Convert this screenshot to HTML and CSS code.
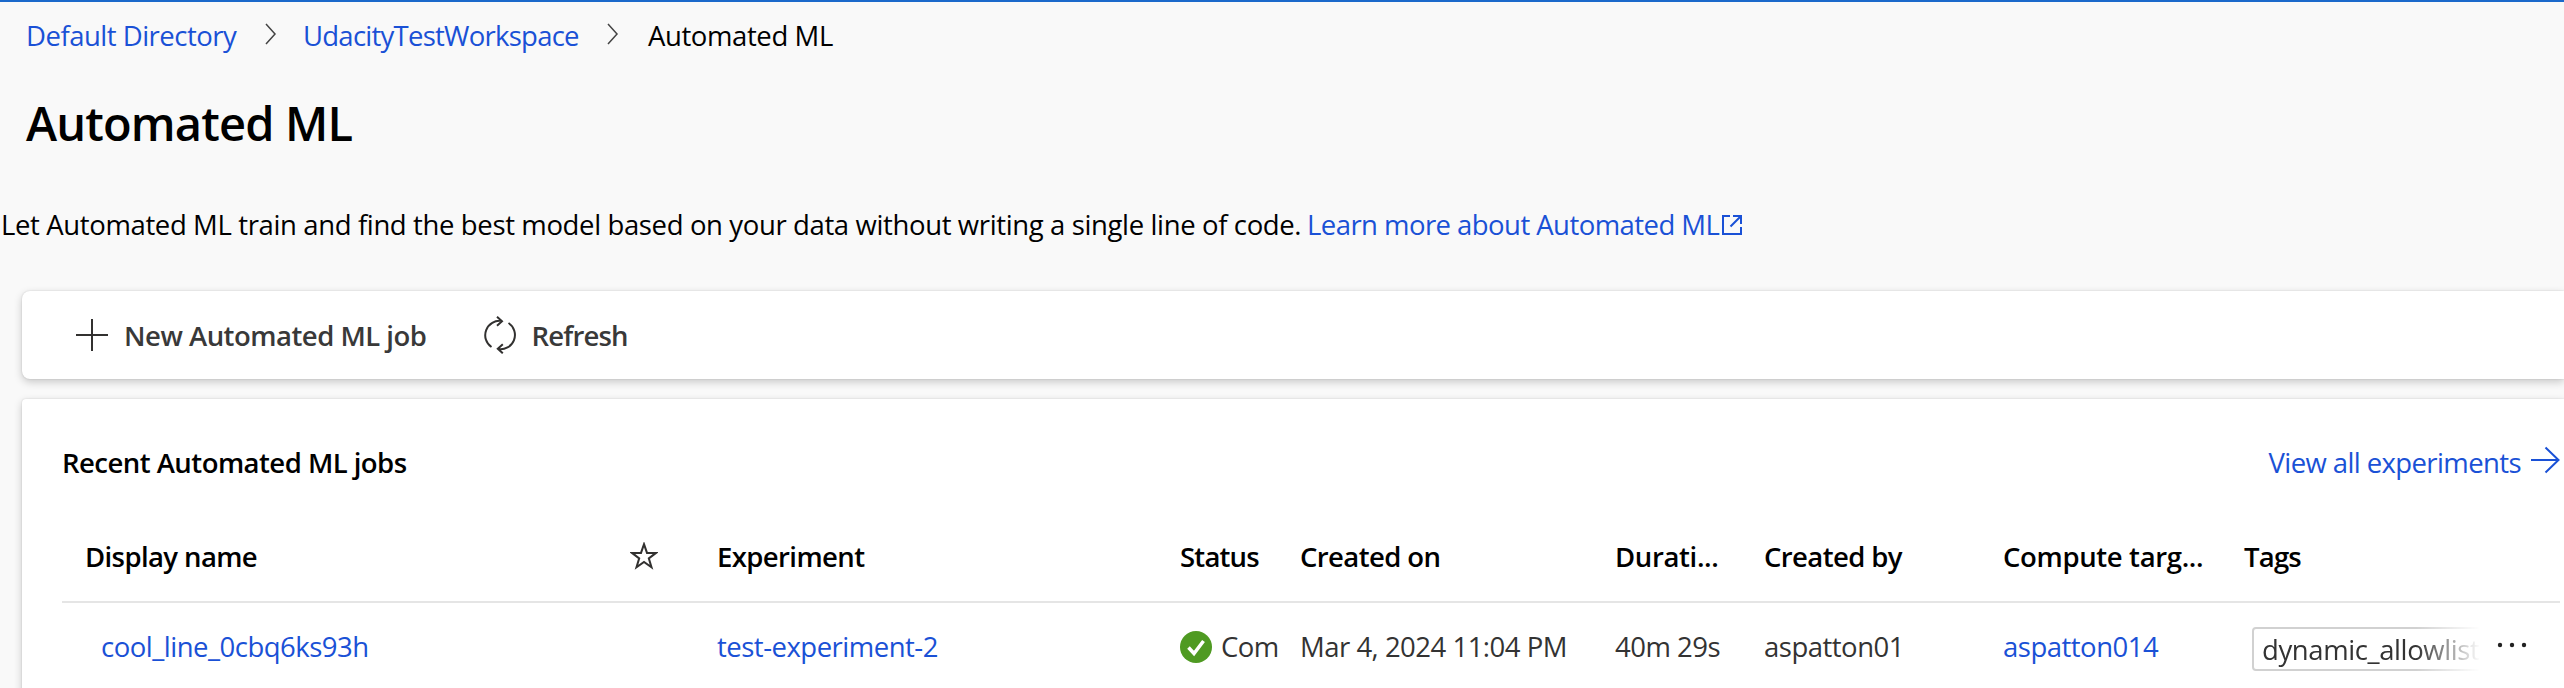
FILE: index.html
```html
<!DOCTYPE html>
<html lang="en">
<head>
<meta charset="utf-8">
<title>Automated ML</title>
<link rel="stylesheet" href="styles.css">
</head>
<body>
<div class="page">
  <nav class="breadcrumb">
    <a class="link crumb-directory" href="#">Default Directory</a>
    <svg class="chevron" viewBox="0 0 12 22"><path d="M1 1l9 10-9 10"/></svg>
    <a class="link crumb-workspace" href="#">UdacityTestWorkspace</a>
    <svg class="chevron" viewBox="0 0 12 22"><path d="M1 1l9 10-9 10"/></svg>
    <span class="crumb-current">Automated ML</span>
  </nav>
  <h1 class="title">Automated ML</h1>
  <p class="intro"><span class="intro-text">Let Automated ML train and find the best model based on your data without writing a single line of code.</span><a class="link intro-link" href="#">Learn more about Automated ML<svg class="external" viewBox="0 0 22 22"><path d="M9 2H2v18h18v-7M12 2h8v8M20 2L9.500 12.500"/></svg></a></p>

  <div class="toolbar">
    <button class="command"><svg class="plus" viewBox="0 0 32 32"><path d="M16 0v32M0 16h32"/></svg><span>New Automated ML job</span></button>
    <button class="command refresh"><svg class="refresh-icon" viewBox="0 0 32 38"><path d="M7.500 31A14.300 14.300 0 0 1 17.500 5M13 .8l5 4.500-5 4.500M24.500 7A14.300 14.300 0 0 1 14 33M18.800 28.300l-5 4.500 5 4.500"/></svg><span>Refresh</span></button>
  </div>

  <section class="card">
    <header class="card-head">
      <h2 class="card-title">Recent Automated ML jobs</h2>
      <a class="link view-all" href="#">View all experiments<svg class="arrow" viewBox="0 0 29 28"><path d="M0 14h27M14.500 1.500L27.500 14 14.500 26.500"/></svg></a>
    </header>
    <div class="grid grid-head">
      <span class="name">Display name</span>
      <span class="star-cell"><svg class="star" viewBox="0 0 28 28"><path d="M14 2.200l3 8.700h9l-7.200 5.500 2.700 8.900-7.500-5.400-7.500 5.400 2.700-8.900L2 10.900h9z"/></svg></span>
      <span>Experiment</span>
      <span class="tight">Status</span>
      <span>Created on</span>
      <span class="loose">Durati...</span>
      <span>Created by</span>
      <span class="loose">Compute targ...</span>
      <span class="tight">Tags</span>
    </div>
    <div class="grid grid-row">
      <a class="link run-name" href="#">cool_line_0cbq6ks93h</a>
      <span></span>
      <a class="link" href="#">test-experiment-2</a>
      <span class="status"><svg class="check" viewBox="0 0 32 32"><circle cx="16" cy="16" r="16"/><path d="M8.500 16.500l5.500 6 9.500-12.500"/></svg><span class="status-text">Com</span></span>
      <span>Mar 4, 2024 11:04 PM</span>
      <span>40m 29s</span>
      <span>aspatton01</span>
      <a class="link" href="#">aspatton014</a>
      <span class="tags"><span class="tag-clip"><span class="tag">dynamic_allowlist</span></span><svg class="more" viewBox="0 0 30 6"><circle cx="3" cy="3" r="2.200"/><circle cx="15" cy="3" r="2.200"/><circle cx="27" cy="3" r="2.200"/></svg></span>
    </div>
  </section>
</div>
</body>
</html>
```

FILE: styles.css
```css
* { box-sizing: border-box; }

body {
  margin: 0;
  background: #f9f9f9;
  color: #000;
  font: 400 27.5px/40px "Open Sans", "Noto Sans", sans-serif;
  letter-spacing: -0.5px;
}

.page {
  height: 688px;
  overflow: hidden;
  border-top: 2px solid #1b69cb;
  white-space: nowrap;
}

svg { flex: none; fill: none; stroke: #323130; stroke-width: 2; }

.link { color: #1a51d6; text-decoration: none; }

.breadcrumb { display: flex; align-items: center; padding: 14px 0 0 26px; height: 54px; }
.chevron { width: 12px; height: 22px; margin-top: -4px; stroke: #444; stroke-width: 1.500; }
.crumb-directory { width: 239px; }
.crumb-workspace { width: 304px; margin-left: 26px; letter-spacing: -0.75px; }
.crumb-current { margin-left: 29px; letter-spacing: -0.4px; }

.title {
  margin: 35px 0 0 26px;
  font-size: 47px;
  font-weight: 600;
  line-height: 64px;
  letter-spacing: -0.85px;
}

.intro { display: flex; margin: 50px 0 0 1px; }
.intro-text { width: 1306px; letter-spacing: -0.37px; }
.intro-link { display: flex; align-items: center; letter-spacing: -0.55px; }
.external { width: 22px; height: 22px; margin-left: 2px; stroke: #1a51d6; }

.toolbar {
  display: flex;
  align-items: center;
  height: 88px;
  margin: 46px 0 0 22px;
  padding-left: 54px;
  background: #fff;
  border-radius: 8px 0 0 8px;
  box-shadow: 0 3px 8px rgba(0, 0, 0, 0.2), 0 0 2px rgba(0, 0, 0, 0.14);
}
.command {
  display: flex;
  align-items: center;
  padding: 0;
  border: 0;
  background: none;
  color: #393939;
  font: inherit;
  font-weight: 600;
  letter-spacing: inherit;
}
.command span { padding-top: 2px; }
.plus { width: 32px; height: 32px; margin-right: 16px; }
.refresh { margin-left: 58px; letter-spacing: -0.8px; }
.refresh-icon { width: 32px; height: 38px; margin-right: 15px; }

.card {
  height: 310px;
  margin: 20px 0 0 22px;
  padding: 44px 4px 0 40px;
  background: #fff;
  border-radius: 4px 0 0 0;
  box-shadow: 0 3px 8px rgba(0, 0, 0, 0.2), 0 0 2px rgba(0, 0, 0, 0.14);
}
.card-head { display: flex; justify-content: space-between; height: 40px; }
.card-title { margin: 0; font-size: inherit; font-weight: 600; letter-spacing: -0.53px; }
.view-all { display: flex; align-items: center; letter-spacing: -0.6px; }
.arrow { width: 29px; height: 28px; margin: -7px 0 0 10px; stroke: #1a51d6; }

.grid {
  display: grid;
  grid-template-columns: 554px 101px 463px 120px 315px 149px 239px 241px 1fr;
  align-items: center;
}
.grid-head { height: 120px; padding: 36px 0 6px; border-bottom: 2px solid #e5e5e5; font-weight: 600; letter-spacing: -0.6px; }
.grid-row { height: 88px; color: #333; }
.name { padding-left: 23px; }
.star-cell { display: flex; padding-left: 14px; }
.star { width: 28px; height: 28px; margin-top: -3px; }
.tight { letter-spacing: -0.8px; }
.loose { letter-spacing: -0.35px; }
.run-name { padding-left: 39px; }

.status { display: flex; align-items: center; }
.status-text { margin-left: 9px; }
.check { width: 32px; height: 32px; }
.check circle { fill: #4f9a22; stroke: none; }
.check path { stroke: #fff; stroke-width: 3.500; }

.tags { display: flex; align-items: center; }
.tag-clip {
  width: 228px;
  height: 44px;
  margin: 3px 0 0 8px;
  overflow: hidden;
  -webkit-mask-image: linear-gradient(90deg, #000 72%, transparent);
  mask-image: linear-gradient(90deg, #000 72%, transparent);
}
.tag { display: block; width: 290px; height: 44px; padding-left: 8px; border: 2px solid #d1d1d1; border-radius: 4px; line-height: 42px; letter-spacing: -0.4px; }
.more { width: 30px; height: 6px; margin: -4px 0 0 17px; fill: #222; stroke: none; }
```
